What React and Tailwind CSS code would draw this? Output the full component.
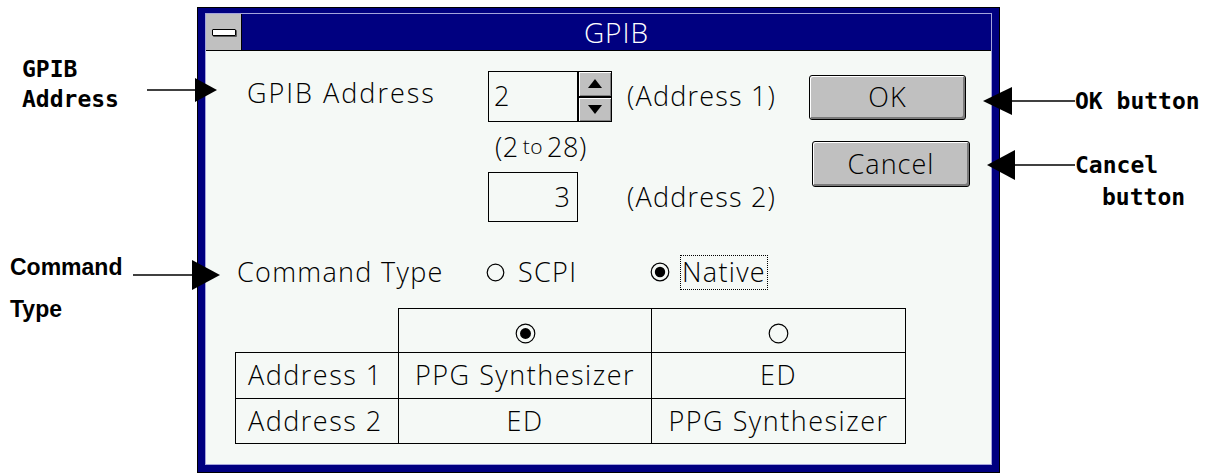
const note = "font-['DejaVu_Sans_Mono','Liberation_Mono',monospace] font-bold text-[23px] leading-[30px] whitespace-nowrap text-black"
const dlg = "font-['Open_Sans','Liberation_Sans',sans-serif] font-light text-[27px] text-black"

// filled arrow: a line with a triangle head at one end
function Arrow({ w, h, head, left, className = '' }) {
  const mid = h / 2
  return (
    <svg width={w} height={h} viewBox={`0 0 ${w} ${h}`} className={`shrink-0 ${className}`}>
      {left ? (
        <>
          <line x1={head} y1={mid} x2={w} y2={mid} stroke="#000" strokeWidth="1.5" />
          <polygon points={`0,${mid} ${head},0 ${head},${h}`} fill="#000" />
        </>
      ) : (
        <>
          <line x1="0" y1={mid} x2={w - head} y2={mid} stroke="#000" strokeWidth="1.5" />
          <polygon points={`${w},${mid} ${w - head},0 ${w - head},${h}`} fill="#000" />
        </>
      )}
    </svg>
  )
}

function Radio({ checked, size = 20 }) {
  const c = size / 2
  return (
    <svg width={size} height={size} viewBox={`0 0 ${size} ${size}`} className="shrink-0">
      <circle cx={c} cy={c} r={c - 1.2} fill="none" stroke="#000" strokeWidth="1.2" />
      {checked && <circle cx={c} cy={c} r={c * 0.52} fill="#000" />}
    </svg>
  )
}

function SpinBtn({ up }) {
  return (
    <div className="flex-1 bg-[#c0c0c0] border border-black flex items-center justify-center shadow-[inset_1px_1px_0_#fff,inset_-1px_-1px_0_#808080]">
      <svg width="14" height="9" viewBox="0 0 14 9">
        <polygon points={up ? '7,0 14,9 0,9' : '0,0 14,0 7,9'} fill="#000" />
      </svg>
    </div>
  )
}

function Btn({ children, className = '' }) {
  return (
    <button className={`bg-[#c0c0c0] border border-black rounded-[3px] flex items-center justify-center shadow-[inset_1px_1px_0_#fff,inset_-2px_-2px_0_#7a7a7a] ${dlg} text-[24px] tracking-[1px] ${className}`}>
      {children}
    </button>
  )
}

export default function App() {
  return (
    <div className="w-[1210px] h-[473px] overflow-hidden bg-white flex">
      {/* left notes */}
      <div className="w-[197px] shrink-0 relative z-10 flex flex-col">
        <div className="mt-[54px] flex items-center">
          <div className={`w-[147px] shrink-0 pl-[22px] ${note}`}>
            GPIB<br />Address
          </div>
          <Arrow w={70} h={24} head={22} className="mt-[12px]" />
        </div>
        <div className="mt-[132px] flex flex-col font-['Liberation_Sans',sans-serif] font-bold text-[23px] leading-[42px]">
          <div className="flex items-center h-[42px]">
            <span className="w-[133px] shrink-0 pl-[10px]">Command</span>
            <Arrow w={87} h={30} head={28} className="mt-[16px]" />
          </div>
          <span className="pl-[10px]">Type</span>
        </div>
      </div>

      {/* dialog window */}
      <div className="w-[803px] shrink-0 mt-[7px] self-start border border-black bg-[#000080] px-[7px] pt-[5px] pb-[7px]">
        <div className="border border-[#a4a4dc] flex flex-col">
          <div className="h-[37px] flex border-b border-black">
            <div className="w-[36px] bg-[#c0c0c0] border-r border-black flex items-center justify-center">
              <span className="w-[24px] h-[7px] bg-white border border-black rounded-[1px] shadow-[1px_1px_0_#5a5a5a]" />
            </div>
            <div className={`flex-1 flex items-center justify-center ${dlg} text-[28px] text-white tracking-[1px]`}>GPIB</div>
          </div>

          <div className={`h-[413px] bg-[#f5f9f6] flex flex-col items-start ${dlg}`}>
            <div className="flex pt-[20px]">
              <div className="w-[282px] pl-[41px] h-[51px] flex items-center pb-[7px] tracking-[2px]">GPIB Address</div>
              <div className="w-[139px] flex flex-col">
                <div className="flex h-[51px]">
                  <div className="w-[90px] border border-black flex items-center pl-[5px]">2</div>
                  <div className="w-[34px] flex flex-col">
                    <SpinBtn up />
                    <SpinBtn />
                  </div>
                </div>
                <div className="h-[50px] flex items-center pl-[7px] tracking-[0.5px]">
                  (2 <span className="text-[21px] mx-[4px]">to</span> 28)
                </div>
                <div className="w-[90px] h-[50px] border border-black flex items-center justify-end pr-[7px]">3</div>
              </div>
              <div className="w-[182px] flex flex-col tracking-[1.2px]">
                <div className="h-[51px] flex items-center">(Address 1)</div>
                <div className="h-[50px]" />
                <div className="h-[50px] flex items-center">(Address 2)</div>
              </div>
              <div className="flex flex-col pt-[4px]">
                <Btn className="w-[157px] h-[45px]">OK</Btn>
                <Btn className="w-[158px] h-[46px] mt-[21px] ml-[3px]">Cancel</Btn>
              </div>
            </div>

            <div className="mt-[30px] h-[40px] flex items-center tracking-[1.3px]">
              <span className="ml-[31px] w-[249px] shrink-0">Command Type</span>
              <div className="w-[164px] shrink-0 flex items-center">
                <Radio size={19} />
                <span className="ml-[13px]">SCPI</span>
              </div>
              <Radio checked size={20} />
              <span className="ml-[10px] h-[35px] w-[88px] border border-dotted border-black flex items-center justify-center">Native</span>
            </div>

            <table className="mt-[16px] ml-[29px] w-[670px] table-fixed border-collapse tracking-[1.5px]">
              <colgroup>
                <col className="w-[163px]" />
                <col className="w-[253px]" />
                <col className="w-[254px]" />
              </colgroup>
              <tbody>
                <tr className="h-[44px]">
                  <td className="p-0" />
                  <td className="border border-black text-center p-0">
                    <span className="inline-flex align-middle"><Radio checked size={21} /></span>
                  </td>
                  <td className="border border-black text-center p-0">
                    <span className="inline-flex align-middle"><Radio size={21} /></span>
                  </td>
                </tr>
                <tr className="h-[46px]">
                  <td className="border border-black pl-[12px] p-0">Address 1</td>
                  <td className="border border-black text-center p-0">PPG Synthesizer</td>
                  <td className="border border-black text-center p-0">ED</td>
                </tr>
                <tr className="h-[45px]">
                  <td className="border border-black pl-[12px] p-0">Address 2</td>
                  <td className="border border-black text-center p-0">ED</td>
                  <td className="border border-black text-center p-0">PPG Synthesizer</td>
                </tr>
              </tbody>
            </table>
          </div>
        </div>
      </div>

      {/* right notes */}
      <div className="flex-1 relative z-10 flex flex-col">
        <div className="mt-[86px] h-[30px] flex items-center -ml-[17px]">
          <Arrow left w={92} h={28} head={29} />
          <span className={note}>OK button</span>
        </div>
        <div className="mt-[34px] flex flex-col">
          <div className="h-[30px] flex items-center -ml-[13px]">
            <Arrow left w={88} h={30} head={28} />
            <span className={note}>Cancel</span>
          </div>
          <span className={`${note} pl-[102px] mt-[2px]`}>button</span>
        </div>
      </div>
    </div>
  )
}
